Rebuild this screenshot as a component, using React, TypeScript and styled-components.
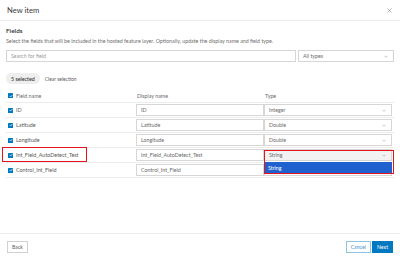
import React from "react";
import styled, { createGlobalStyle } from "styled-components";

const Global = createGlobalStyle`
  html, body { margin: 0; padding: 0; background: #fff; }
  body { font-family: Lato, "Open Sans", sans-serif; color: #4a4a4a; }
  * { box-sizing: border-box; }
`;

const Dialog = styled.div`
  width: 400px;
  height: 259px;
  display: flex;
  flex-direction: column;
  background: #fff;
`;

const Header = styled.div`
  height: 21px;
  flex: none;
  display: flex;
  align-items: center;
  justify-content: space-between;
  padding: 0 8px 0 7px;
  border-bottom: 1px solid #ececec;
`;

const HeaderTitle = styled.div`
  font-size: 7.6px;
  color: #3a3a3a;
`;

const Close = styled.svg`
  width: 5px;
  height: 5px;
`;

const Content = styled.div`
  flex: 1;
  display: flex;
  flex-direction: column;
  padding: 6px 6px 0 6px;
`;

const Title = styled.div`
  font-size: 6.4px;
  font-weight: 600;
  color: #2b2b2b;
  line-height: 8px;
`;

const Desc = styled.div`
  margin-top: 3px;
  font-size: 5.3px;
  color: #6e6e6e;
  line-height: 7px;
  white-space: nowrap;
`;

const SearchRow = styled.div`
  margin-top: 5px;
  display: flex;
  gap: 2px;
`;

const Input = styled.div<{ $grow?: boolean; $w?: number }>`
  height: 12px;
  border: 1px solid #d6d6d6;
  background: #fff;
  display: flex;
  align-items: center;
  padding: 0 4px;
  font-size: 5.3px;
  color: #6a6a6a;
  white-space: nowrap;
  ${(p) => (p.$grow ? "flex: 1;" : "")}
  ${(p) => (p.$w ? `width: ${p.$w}px; flex: none;` : "")}
`;

const Placeholder = styled.span`
  color: #9a9a9a;
`;

const SelectBox = styled(Input)<{ $open?: boolean }>`
  justify-content: space-between;
  padding: 0 5px 0 4px;
  ${(p) => (p.$open ? "background: #f2f2f2;" : "")}
`;

const Chevron = styled.svg`
  width: 4px;
  height: 3px;
`;

const SelRow = styled.div`
  margin-top: 11px;
  display: flex;
  align-items: center;
  gap: 5px;
`;

const Pill = styled.div`
  height: 11px;
  padding: 0 5px;
  border-radius: 6px;
  background: #eeeeee;
  font-size: 5.3px;
  font-weight: 500;
  color: #303030;
  display: flex;
  align-items: center;
`;

const LinkText = styled.div`
  font-size: 4.9px;
  color: #5a5a5a;
`;

const Table = styled.div`
  margin-top: 5px;
  display: grid;
  grid-template-columns: 130px 128px 130px;
`;

const HeadCell = styled.div<{ $first?: boolean }>`
  height: 14px;
  display: flex;
  align-items: center;
  gap: 3px;
  font-size: 5.3px;
  color: #6a6a6a;
  padding-left: ${(p) => (p.$first ? 2 : 1)}px;
  border-bottom: 1px solid #ececec;
`;

const Cell = styled.div`
  position: relative;
  height: 15px;
  display: flex;
  align-items: center;
  gap: 3px;
  font-size: 5.4px;
  color: #5a5a5a;
  border-bottom: 1px solid #ececec;
  white-space: nowrap;
`;

const NameCell = styled(Cell)`
  padding-left: 2px;
`;

const Check = styled.div`
  width: 5px;
  height: 5px;
  border-radius: 0.5px;
  background: #0079c1;
  display: flex;
  align-items: center;
  justify-content: center;
  flex: none;
`;

const Annot = styled.div`
  position: absolute;
  border: 1.5px solid #e3141b;
  pointer-events: none;
`;

const NameAnnot = styled(Annot)`
  left: -4px;
  top: -1px;
  width: 85px;
  height: 15px;
`;

const TypeCell = styled(Cell)`
  padding-right: 2px;
  & > div:first-child { flex: 1; }
`;

const Popup = styled.div`
  position: absolute;
  left: 0;
  right: 2px;
  top: 14px;
  z-index: 2;
  background: #fff;
`;

const Option = styled.div`
  height: 11px;
  background: #1f62cf;
  color: #fff;
  font-size: 5.3px;
  display: flex;
  align-items: center;
  padding-left: 4px;
`;

const TypeAnnot = styled(Annot)`
  z-index: 3;
  left: 0;
  right: 0;
  top: 2px;
  height: 24px;
`;

const Footer = styled.div`
  flex: none;
  height: 26px;
  border-top: 1px solid #ececec;
  display: flex;
  align-items: flex-start;
  padding: 7px 7px 0 7px;
  gap: 1px;
`;

const Btn = styled.div<{ $kind: "plain" | "outline" | "solid" }>`
  height: 12px;
  padding: 0 4px;
  display: flex;
  align-items: center;
  font-size: 5.2px;
  border: 1px solid
    ${(p) => (p.$kind === "plain" ? "#d0d0d0" : p.$kind === "outline" ? "#8cc3e6" : "#0079c1")};
  background: ${(p) => (p.$kind === "solid" ? "#0079c1" : "#fff")};
  color: ${(p) => (p.$kind === "plain" ? "#5a5a5a" : p.$kind === "outline" ? "#3c93d0" : "#fff")};
`;

const Spacer = styled.div`
  flex: 1;
`;

const ChevronIcon = () => (
  <Chevron viewBox="0 0 8 5">
    <path d="M1 1l3 3 3-3" fill="none" stroke="#8a8a8a" strokeWidth="1" />
  </Chevron>
);

const CheckIcon = () => (
  <svg width="4" height="4" viewBox="0 0 8 8">
    <path d="M1.5 4.2l1.8 1.8 3.4-3.8" fill="none" stroke="#fff" strokeWidth="1.4" />
  </svg>
);

const rows = [
  { name: "ID", type: "Integer" },
  { name: "Latitude", type: "Double" },
  { name: "Longitude", type: "Double" },
  { name: "Int_Field_AutoDetect_Test", type: "String", open: true },
  { name: "Control_Int_Field", type: "Integer", covered: true },
];

export default function App() {
  return (
    <Dialog>
      <Global />
      <Header>
        <HeaderTitle>New item</HeaderTitle>
        <Close viewBox="0 0 10 10">
          <path d="M1 1l8 8M9 1l-8 8" stroke="#6a6a6a" strokeWidth="1" />
        </Close>
      </Header>
      <Content>
        <Title>Fields</Title>
        <Desc>
          Select the fields that will be included in the hosted feature layer. Optionally, update the display name and field type.
        </Desc>
        <SearchRow>
          <Input $grow>
            <Placeholder>Search for field</Placeholder>
          </Input>
          <SelectBox $w={96}>
            <span>All types</span>
            <ChevronIcon />
          </SelectBox>
        </SearchRow>
        <SelRow>
          <Pill>5 selected</Pill>
          <LinkText>Clear selection</LinkText>
        </SelRow>
        <Table>
          <HeadCell $first>
            <Check>
              <CheckIcon />
            </Check>
            Field name
          </HeadCell>
          <HeadCell>Display name</HeadCell>
          <HeadCell>Type</HeadCell>
          {rows.map((r) => (
            <React.Fragment key={r.name}>
              <NameCell>
                <Check>
                  <CheckIcon />
                </Check>
                {r.name}
                {r.open && <NameAnnot />}
              </NameCell>
              <Cell>
                <Input $grow>{r.name}</Input>
              </Cell>
              <TypeCell>
                <SelectBox $open={r.open}>
                  <span>{r.covered ? "" : r.type}</span>
                  <ChevronIcon />
                </SelectBox>
                {r.open && (
                  <>
                    <Popup>
                      <Option>String</Option>
                    </Popup>
                    <TypeAnnot />
                  </>
                )}
              </TypeCell>
            </React.Fragment>
          ))}
        </Table>
      </Content>
      <Footer>
        <Btn $kind="plain">Back</Btn>
        <Spacer />
        <Btn $kind="outline">Cancel</Btn>
        <Btn $kind="solid">Next</Btn>
      </Footer>
    </Dialog>
  );
}
